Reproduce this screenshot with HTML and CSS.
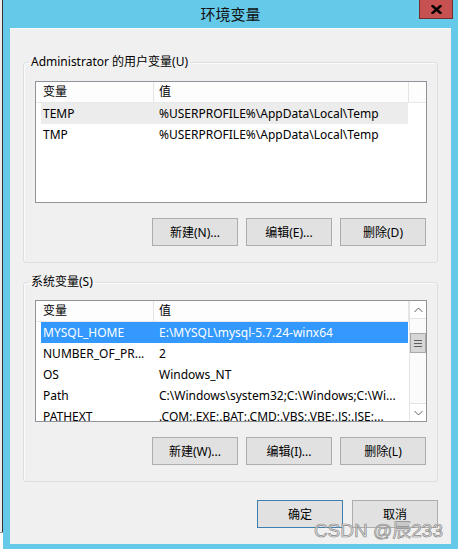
FILE: index.html
```html
<!DOCTYPE html>
<html lang="zh-CN">
<head>
<meta charset="utf-8">
<title>环境变量</title>
<link rel="stylesheet" href="styles.css">
</head>
<body>
<div class="screen">
  <div class="edge"><div class="edge-top"></div><div class="edge-bottom"></div></div>
  <div class="window">
    <div class="titlebar"><span class="title">环境变量</span></div>
    <button class="close" aria-label="关闭">
      <svg width="11" height="9" viewBox="0 0 11 9"><path d="M1.5 1 L9.5 8 M9.5 1 L1.5 8" stroke="#000" stroke-width="2.4" stroke-linecap="square"/></svg>
    </button>
    <div class="client">
      <fieldset class="group first">
        <legend>Administrator 的用户变量(U)</legend>
        <div class="list">
          <div class="list-main">
            <div class="header">
              <div class="hcell c1">变量</div>
              <div class="hcell c2">值</div>
              <div class="hfill"></div>
            </div>
            <div class="row sel-gray"><div class="cell c1">TEMP</div><div class="cell c2">%USERPROFILE%\AppData\Local\Temp</div></div>
            <div class="row"><div class="cell c1">TMP</div><div class="cell c2">%USERPROFILE%\AppData\Local\Temp</div></div>
          </div>
        </div>
        <div class="btns">
          <button class="btn">新建(N)...</button>
          <button class="btn">编辑(E)...</button>
          <button class="btn">删除(D)</button>
        </div>
      </fieldset>
      <fieldset class="group second">
        <legend>系统变量(S)</legend>
        <div class="list">
          <div class="list-main">
            <div class="header">
              <div class="hcell c1">变量</div>
              <div class="hcell c2">值</div>
            </div>
            <div class="row sel-blue"><div class="cell c1">MYSQL_HOME</div><div class="cell c2">E:\MYSQL\mysql-5.7.24-winx64</div></div>
            <div class="row"><div class="cell c1">NUMBER_OF_PR...</div><div class="cell c2">2</div></div>
            <div class="row"><div class="cell c1">OS</div><div class="cell c2">Windows_NT</div></div>
            <div class="row"><div class="cell c1">Path</div><div class="cell c2">C:\Windows\system32;C:\Windows;C:\Wi...</div></div>
            <div class="row"><div class="cell c1">PATHEXT</div><div class="cell c2">.COM;.EXE;.BAT;.CMD;.VBS;.VBE;.JS;.JSE;...</div></div>
          </div>
          <div class="scrollbar">
            <div class="sb-btn"><svg width="9" height="6" viewBox="0 0 9 6"><path d="M0.5 5 L4.5 1 L8.5 5" fill="none" stroke="#606060" stroke-width="1"/></svg></div>
            <div class="sb-track">
              <div class="sb-thumb"><span></span><span></span><span></span></div>
            </div>
            <div class="sb-btn"><svg width="9" height="6" viewBox="0 0 9 6"><path d="M0.5 1 L4.5 5 L8.5 1" fill="none" stroke="#606060" stroke-width="1"/></svg></div>
          </div>
        </div>
        <div class="btns">
          <button class="btn">新建(W)...</button>
          <button class="btn">编辑(I)...</button>
          <button class="btn">删除(L)</button>
        </div>
      </fieldset>
      <div class="footer">
        <button class="btn default">确定</button>
        <button class="btn">取消</button>
      </div>
    </div>
    <div class="watermark">CSDN @辰233</div>
  </div>
</div>
</body>
</html>
```

FILE: styles.css
```css
* { box-sizing: border-box; }
html, body { margin: 0; padding: 0; }
body {
  width: 458px;
  height: 549px;
  overflow: hidden;
  font-family: "Noto Sans", "Noto Sans CJK SC", sans-serif;
  font-size: 12px;
  color: #000;
}
.screen {
  display: flex;
  width: 458px;
  height: 549px;
}
.edge {
  width: 3px;
  display: flex;
  flex-direction: column;
}
.edge-top {
  flex: 1;
  background: linear-gradient(to right, #ececec 0, #ececec 2px, #333 2px, #333 3px);
}
.edge-bottom {
  height: 17px;
  background: #fff;
  border-top: 1px solid #9a9a9a;
}
.window {
  flex: 1;
  position: relative;
  display: flex;
  flex-direction: column;
  background: #65c9ea;
}
.titlebar {
  height: 28px;
  display: flex;
  align-items: center;
  justify-content: center;
  padding-bottom: 2px;
}
.title {
  font-family: "Noto Sans CJK SC", sans-serif;
  font-size: 15px;
  color: #111;
}
.close {
  position: absolute;
  top: 0;
  right: 5px;
  width: 34px;
  height: 19px;
  padding: 0;
  border: 1px solid #6e2e2e;
  border-top: none;
  background: #c75050;
  display: flex;
  align-items: center;
  justify-content: center;
}
.client {
  flex: 1;
  margin: 0 7px 5px;
  background: #f0f0f0;
  border-top: 1px solid #f8f8f8;
  padding: 0 13px;
  display: flex;
  flex-direction: column;
}
.group {
  margin: 0;
  min-width: 0;
  border: 1px solid #dadfe3;
  border-radius: 3px;
  padding: 11px 10px 16px 11px;
  box-shadow: inset 1px 1px 0 #fbfbfb;
}
.group.first { margin-top: 25px; }
.group.second { margin-top: 11px; padding-top: 10px; }
.group legend {
  margin-left: -6px;
  padding: 0 2px;
  line-height: 16px;
  font-size: 12px;
}
.list {
  height: 122px;
  border: 1px solid #8f939a;
  background: #fff;
  display: flex;
  overflow: hidden;
}
.list-main {
  flex: 1;
  min-width: 0;
}
.header {
  display: flex;
  height: 21px;
  border-bottom: 1px solid #e8e8e8;
  background: #fdfdfd;
}
.hcell {
  line-height: 20px;
  border-right: 1px solid #e5e5e5;
  white-space: nowrap;
}
.hcell.c1 { width: 118px; padding-left: 7px; }
.hcell.c2 { width: 255px; padding-left: 5px; }
.hfill { flex: 1; }
.row {
  display: flex;
  height: 21px;
  margin-left: 5px;
  width: 367px;
  line-height: 21px;
  white-space: nowrap;
}
.cell { overflow: hidden; }
.cell.c1 { width: 113px; padding-left: 2px; }
.cell.c2 { width: 254px; padding-left: 5px; }
.row.sel-gray { background: #ececec; }
.row.sel-blue { background: #3399ff; color: #fff; }
.scrollbar {
  width: 17px;
  display: flex;
  flex-direction: column;
  background: #fbfbfb;
  border-left: 1px solid #e3e3e3;
}
.sb-btn {
  height: 18px;
  display: flex;
  align-items: center;
  justify-content: center;
  border-top: 1px solid #e3e3e3;
  border-bottom: 1px solid #e3e3e3;
  background: #fff;
}
.sb-btn:first-child { border-top: none; }
.sb-btn:last-child { border-bottom: none; }
.sb-track {
  flex: 1;
  padding-top: 14px;
}
.sb-thumb {
  height: 20px;
  background: #d6d6d6;
  border: 1px solid #a8a8a8;
  display: flex;
  flex-direction: column;
  align-items: center;
  justify-content: center;
  gap: 2px;
}
.sb-thumb span {
  display: block;
  width: 8px;
  height: 1px;
  background: #5f5f5f;
}
.btns {
  display: flex;
  justify-content: flex-end;
  gap: 8px;
  margin-top: 15px;
  padding-right: 1px;
}
.btn {
  width: 86px;
  height: 28px;
  padding: 0;
  border: 1px solid #adadad;
  background: #e1e1e1;
  font-family: "Noto Sans", "Noto Sans CJK SC", sans-serif;
  font-size: 12px;
  color: #000;
}
.footer {
  display: flex;
  justify-content: flex-end;
  gap: 9px;
  margin-top: 18px;
}
.btn.default { border-color: #3c7fb1; }
.watermark {
  position: absolute;
  right: 15px;
  bottom: 8px;
  font-family: "Liberation Sans", "Noto Sans CJK SC", sans-serif;
  font-size: 19px;
  line-height: 20px;
  color: rgba(226, 226, 226, 0.85);
  -webkit-text-stroke: 0.7px #8c8c8c;
}
```
